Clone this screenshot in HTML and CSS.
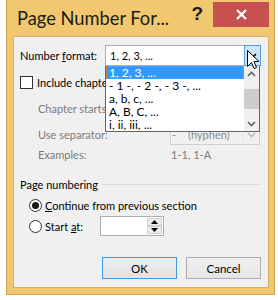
FILE: index.html
```html
<!DOCTYPE html>
<html>
<head>
<meta charset="utf-8">
<link rel="stylesheet" href="styles.css">
</head>
<body>
<div class="window">
  <div class="titlebar">
    <div class="title">Page Number For...</div>
    <div class="help">?</div>
    <div class="close">
      <svg width="11" height="11" viewBox="0 0 11 11"><path d="M1 1L10 10M10 1L1 10" stroke="#fff" stroke-width="2.2"/></svg>
    </div>
  </div>
  <div class="client">
    <div class="row r-format">
      <span class="lbl lbl-format">Number <u>f</u>ormat:</span>
      <div class="combo combo-format">
        <span class="combo-text">1, 2, 3, ...</span>
        <span class="combo-btn hot">
          <svg width="9" height="6" viewBox="0 0 9 6"><path d="M1 1L4.5 4.5L8 1" fill="none" stroke="#000" stroke-width="1.6"/></svg>
        </span>
      </div>
    </div>
    <div class="row r-include">
      <span class="check"></span>
      <span class="lbl clip clip-inc">Include chapter number</span>
    </div>
    <div class="row r-style indent">
      <span class="lbl dis lbl-ind clip">Chapter starts with style:</span>
    </div>
    <div class="row r-sep indent">
      <span class="lbl dis lbl-ind">Use separator:</span>
      <div class="combo dis-combo">
        <span class="combo-text"><span class="hy">-</span>(hyphen)</span>
        <span class="combo-btn dis-btn">
          <svg width="9" height="6" viewBox="0 0 9 6"><path d="M1 1L4.5 4.5L8 1" fill="none" stroke="#bcbcbc" stroke-width="1.6"/></svg>
        </span>
      </div>
    </div>
    <div class="row r-ex indent">
      <span class="lbl dis lbl-ind">Examples:</span>
      <span class="dis ex-val">1-1, 1-A</span>
    </div>
    <div class="row r-group">
      <span class="group-title">Page numbering</span>
      <span class="rule"></span>
    </div>
    <div class="row r-radio1">
      <span class="radio on"></span>
      <span class="lbl"><u>C</u>ontinue from previous section</span>
    </div>
    <div class="row r-radio2">
      <span class="radio"></span>
      <span class="lbl lbl-start">Start <u>a</u>t:</span>
      <div class="spin">
        <span class="spin-field"></span>
        <span class="spin-btns">
          <span class="spin-b"><svg width="7" height="4" viewBox="0 0 7 4"><path d="M0 4L3.5 0L7 4Z" fill="#000"/></svg></span>
          <span class="spin-b"><svg width="7" height="4" viewBox="0 0 7 4"><path d="M0 0L3.5 4L7 0Z" fill="#000"/></svg></span>
        </span>
      </div>
    </div>
    <div class="row r-buttons">
      <button class="btn default">OK</button>
      <button class="btn">Cancel</button>
    </div>

    <div class="list">
      <div class="items">
        <div class="item sel">1, 2, 3, ...</div>
        <div class="item">- 1 -, - 2 -, - 3 -, ...</div>
        <div class="item">a, b, c, ...</div>
        <div class="item">A, B, C, ...</div>
        <div class="item">i, ii, iii, ...</div>
      </div>
      <div class="scrollbar">
        <span class="sb-arrow"><svg width="9" height="6" viewBox="0 0 9 6"><path d="M1 5L4.5 1.5L8 5" fill="none" stroke="#606060" stroke-width="1.6"/></svg></span>
        <span class="sb-thumb"></span>
        <span class="sb-arrow sb-down"><svg width="9" height="6" viewBox="0 0 9 6"><path d="M1 1L4.5 4.5L8 1" fill="none" stroke="#606060" stroke-width="1.6"/></svg></span>
      </div>
    </div>

    <svg class="cursor" width="13" height="20" viewBox="0 0 13 20">
      <path d="M0.5 0.5L0.5 16.5L4.5 12.5L7 18.5L9.5 17.5L7 11.5L12 11.5Z" fill="#fff" stroke="#000" stroke-width="1" stroke-linejoin="miter"/>
    </svg>
  </div>
</div>
</body>
</html>
```

FILE: styles.css
```css
* { box-sizing: border-box; }
html, body { margin: 0; padding: 0; background: #fff; }
body {
  font-family: Lato, "Liberation Sans", sans-serif;
  font-size: 11px;
  color: #000;
}
.window {
  margin-left: 6px;
  width: 269px;
  height: 295px;
  background: #f1c86f;
  border: 1px solid #c9a24f;
  border-top: none;
  display: flex;
  flex-direction: column;
}
.titlebar {
  height: 36px;
  flex: none;
  display: flex;
  align-items: flex-start;
}
.title {
  margin-left: 10px;
  margin-top: 8px;
  font-size: 18.3px;
  color: #1b1b1b;
  line-height: 20px;
  width: 176px;
  white-space: nowrap;
}
.help {
  margin-top: 4px;
  font-family: "Liberation Sans", sans-serif;
  font-weight: bold;
  font-size: 19px;
  line-height: 20px;
  color: #1a1a1a;
  width: 22px;
}
.close {
  margin-top: 2px;
  margin-left: auto;
  margin-right: 5px;
  width: 56px;
  height: 25px;
  background: #c75050;
  display: flex;
  align-items: center;
  justify-content: center;
}
.client {
  position: relative;
  margin-left: 6px;
  width: 256px;
  height: 252px;
  background: #f0f0f0;
  border: 1px solid #d2b168;
  display: flex;
  flex-direction: column;
}
.row { display: flex; align-items: center; flex: none; }
.r-format { margin-top: 8px; height: 21px; padding-left: 6px; }
.lbl-format { width: 85px; }
.r-include { margin-top: 6px; height: 20px; padding-left: 6px; }
.r-style { margin-top: 6px; height: 21px; }
.r-sep { margin-top: 5px; height: 21px; }
.r-ex { height: 18px; }
.indent { padding-left: 24px; }
.lbl-ind { width: 132px; }
.dis { color: #7a7a7a; }
.ex-val { padding-left: 1px; }
.lbl { white-space: nowrap; }
.clip { overflow: hidden; width: 67px; }
.clip-inc { width: 68px; }

.combo {
  display: flex;
  height: 21px;
  background: #fff;
  border: 1px solid #abadb3;
}
.combo-format { width: 156px; border-right: none; }
.combo-text { flex: 1; padding-left: 4px; display: flex; align-items: center; white-space: nowrap; overflow: hidden; }
.combo-btn {
  width: 17px;
  display: flex;
  align-items: center;
  justify-content: center;
}
.hot {
  margin: -1px 0;
  background: #cde6f7;
  border: 1px solid #569de5;
}
.dis-combo {
  width: 90px;
  background: #f0f0f0;
  border-color: #cfcfcf;
  color: #8a8a8a;
}
.dis-combo .combo-text { padding-left: 1px; }
.hy { width: 16px; }
.dis-btn { width: 16px; border-left: 1px solid #e3e3e3; }

.check {
  width: 13px;
  height: 13px;
  border: 1px solid #333;
  background: #fff;
  margin-right: 4px;
}

.r-group { margin-top: 12px; height: 18px; padding-left: 6px; padding-right: 7px; }
.group-title { width: 82px; white-space: nowrap; }
.rule { flex: 1; height: 1px; background: #dcdcdc; }

.r-radio1 { margin-top: 2px; height: 20px; padding-left: 15px; }
.r-radio2 { margin-top: 1px; height: 20px; padding-left: 15px; }
.radio {
  width: 13px;
  height: 13px;
  border-radius: 50%;
  border: 1px solid #333;
  background: #fff;
  margin-right: 3px;
  display: flex;
  align-items: center;
  justify-content: center;
}
.radio.on::after {
  content: "";
  width: 7px;
  height: 7px;
  border-radius: 50%;
  background: #1a1a1a;
}
.lbl-start { width: 55px; }
.spin {
  display: flex;
  width: 64px;
  height: 20px;
  border: 1px solid #abadb3;
  background: #fff;
}
.spin-field { flex: 1; }
.spin-btns {
  width: 16px;
  display: flex;
  flex-direction: column;
  padding: 1px 1px 1px 0;
}
.spin-b {
  flex: 1;
  background: #ececec;
  border: 1px solid #d0d0d0;
  display: flex;
  align-items: center;
  justify-content: center;
}

.r-buttons {
  margin-top: 21px;
  height: 22px;
  justify-content: flex-end;
  padding-right: 7px;
  gap: 9px;
}
.btn {
  width: 75px;
  height: 22px;
  font: inherit;
  font-size: 11.5px;
  color: #000;
  background: linear-gradient(#f0f0f0, #e5e5e5);
  border: 1px solid #acacac;
  padding: 0;
  margin: 0;
}
.btn.default { border-color: #3c9ae8; background: linear-gradient(#ececec, #e3e3e3); }

.list {
  position: absolute;
  left: 91px;
  top: 29px;
  width: 155px;
  height: 66px;
  background: #fff;
  border: 1px solid #646464;
  border-top: none;
  display: flex;
  font-size: 12px;
}
.items { width: 138px; display: flex; flex-direction: column; }
.item {
  height: 13px;
  line-height: 13px;
  padding-left: 3px;
  white-space: nowrap;
}
.item.sel {
  background: #3399ff;
  color: #fff;
  outline: 1px dotted #e08a2c;
  outline-offset: -1px;
}
.scrollbar {
  width: 15px;
  background: #f0f0f0;
  display: flex;
  flex-direction: column;
  align-items: center;
}
.sb-arrow { height: 16px; width: 15px; display: flex; align-items: center; justify-content: center; flex: none; }
.sb-thumb { margin-top: 7px; width: 15px; height: 20px; background: #cdcdcd; flex: none; }
.sb-down { margin-top: auto; height: 14px; }

.cursor {
  position: absolute;
  left: 233px;
  top: 13px;
}
```
